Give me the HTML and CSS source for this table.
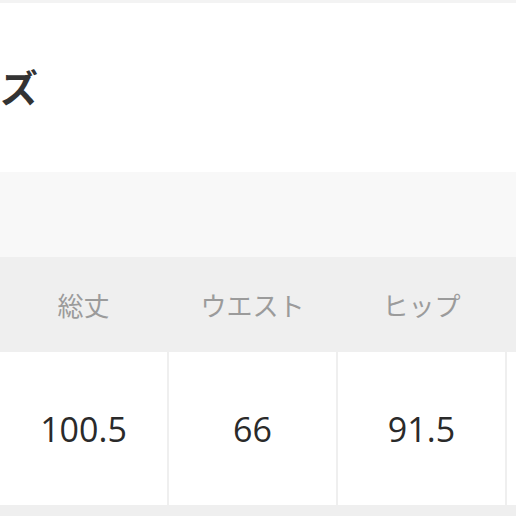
FILE: index.html
```html
<!DOCTYPE html>
<html lang="ja">
<head>
<meta charset="utf-8">
<title>サイズ</title>
<link rel="stylesheet" href="styles.css">
</head>
<body>
<div class="page">
  <div class="topbar"></div>
  <h2 class="title">ズ</h2>
  <div class="band"></div>
  <div class="table">
    <div class="th">総丈</div>
    <div class="th">ウエスト</div>
    <div class="th">ヒップ</div>
    <div class="th"></div>
    <div class="td">100.5</div>
    <div class="td">66</div>
    <div class="td">91.5</div>
    <div class="td"></div>
  </div>
</div>
</body>
</html>
```

FILE: styles.css
```css
html, body {
  margin: 0;
  padding: 0;
  background: #ffffff;
}
.page {
  width: 516px;
  height: 516px;
  overflow: hidden;
  font-family: "Noto Sans CJK JP", "Noto Sans", sans-serif;
}
.topbar {
  height: 3px;
  background: #f3f3f3;
}
.title {
  margin: 64px 0 0 0;
  height: 38px;
  font-size: 38px;
  line-height: 38px;
  font-weight: 700;
  color: #333333;
}
.band {
  margin-top: 67px;
  height: 85px;
  background: #f8f8f8;
}
.table {
  display: grid;
  grid-template-columns: repeat(4, 167px);
  grid-template-rows: 95px 153px;
  column-gap: 2px;
  width: 674px;
  padding-bottom: 20px;
  background: #efefef;
}
.th {
  display: flex;
  align-items: center;
  justify-content: center;
  font-size: 26px;
  color: #9b9b9b;
  font-weight: 400;
}
.td {
  display: flex;
  align-items: center;
  justify-content: center;
  background: #ffffff;
  font-family: "Open Sans", "Noto Sans", sans-serif;
  font-size: 34px;
  color: #2a2a2a;
}
```
